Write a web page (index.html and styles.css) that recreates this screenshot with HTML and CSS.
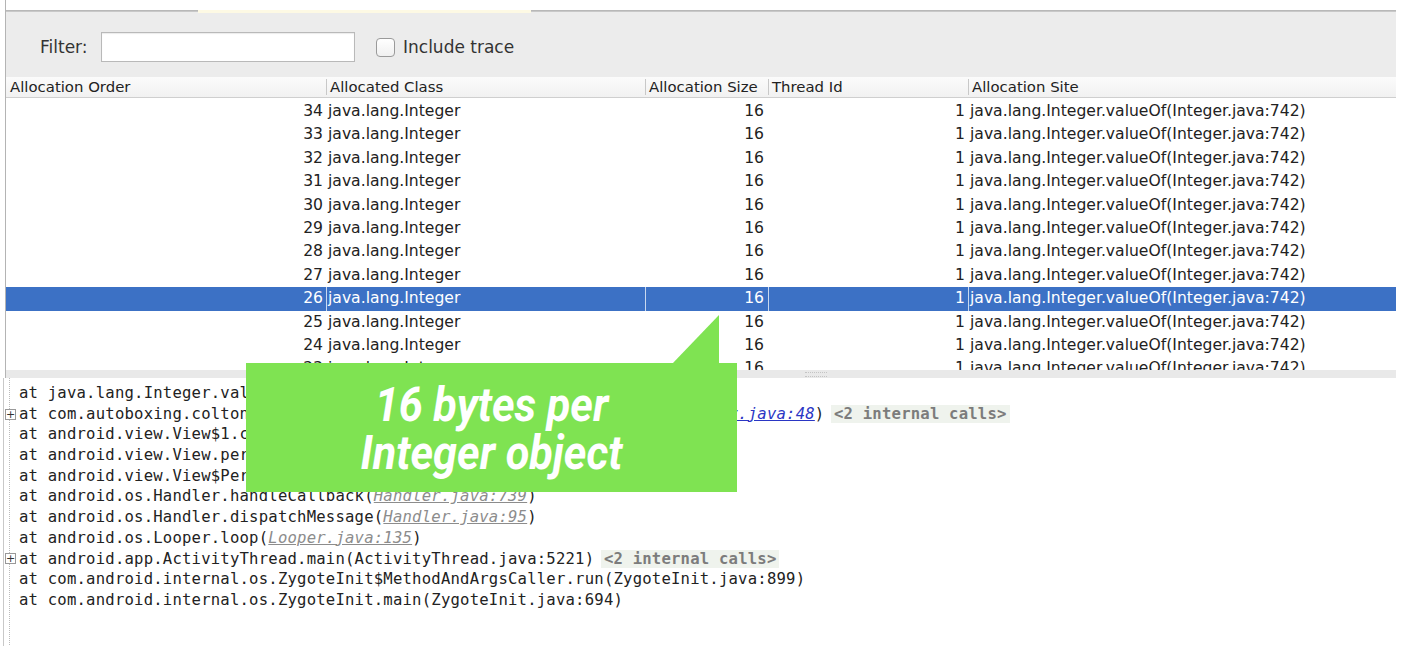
FILE: index.html
```html
<!DOCTYPE html>
<html>
<head>
<meta charset="utf-8">
<link rel="stylesheet" href="styles.css">
</head>
<body>
<div class="window">
  <div class="tabstrip"><span class="tab-a"></span><span class="tab-active"></span><span class="tab-b"></span></div>
  <div class="filterbar">
    <label class="filter-label">Filter:</label>
    <div class="filter-input"></div>
    <span class="checkbox"></span>
    <span class="check-label">Include trace</span>
  </div>
  <div class="table">
    <div class="thead">
      <div class="th">Allocation Order</div>
      <div class="th sep">Allocated Class</div>
      <div class="th sep">Allocation Size</div>
      <div class="th sep">Thread Id</div>
      <div class="th sep">Allocation Site</div>
    </div>
    <div class="tbody">
      <div class="row"><div class="c1">34</div><div class="c2">java.lang.Integer</div><div class="c3">16</div><div class="c4">1</div><div class="c5">java.lang.Integer.valueOf(Integer.java:742)</div></div>
      <div class="row"><div class="c1">33</div><div class="c2">java.lang.Integer</div><div class="c3">16</div><div class="c4">1</div><div class="c5">java.lang.Integer.valueOf(Integer.java:742)</div></div>
      <div class="row"><div class="c1">32</div><div class="c2">java.lang.Integer</div><div class="c3">16</div><div class="c4">1</div><div class="c5">java.lang.Integer.valueOf(Integer.java:742)</div></div>
      <div class="row"><div class="c1">31</div><div class="c2">java.lang.Integer</div><div class="c3">16</div><div class="c4">1</div><div class="c5">java.lang.Integer.valueOf(Integer.java:742)</div></div>
      <div class="row"><div class="c1">30</div><div class="c2">java.lang.Integer</div><div class="c3">16</div><div class="c4">1</div><div class="c5">java.lang.Integer.valueOf(Integer.java:742)</div></div>
      <div class="row"><div class="c1">29</div><div class="c2">java.lang.Integer</div><div class="c3">16</div><div class="c4">1</div><div class="c5">java.lang.Integer.valueOf(Integer.java:742)</div></div>
      <div class="row"><div class="c1">28</div><div class="c2">java.lang.Integer</div><div class="c3">16</div><div class="c4">1</div><div class="c5">java.lang.Integer.valueOf(Integer.java:742)</div></div>
      <div class="row"><div class="c1">27</div><div class="c2">java.lang.Integer</div><div class="c3">16</div><div class="c4">1</div><div class="c5">java.lang.Integer.valueOf(Integer.java:742)</div></div>
      <div class="row selected"><div class="c1">26</div><div class="c2">java.lang.Integer</div><div class="c3">16</div><div class="c4">1</div><div class="c5">java.lang.Integer.valueOf(Integer.java:742)</div></div>
      <div class="row"><div class="c1">25</div><div class="c2">java.lang.Integer</div><div class="c3">16</div><div class="c4">1</div><div class="c5">java.lang.Integer.valueOf(Integer.java:742)</div></div>
      <div class="row"><div class="c1">24</div><div class="c2">java.lang.Integer</div><div class="c3">16</div><div class="c4">1</div><div class="c5">java.lang.Integer.valueOf(Integer.java:742)</div></div>
      <div class="row"><div class="c1">23</div><div class="c2">java.lang.Integer</div><div class="c3">16</div><div class="c4">1</div><div class="c5">java.lang.Integer.valueOf(Integer.java:742)</div></div>
    </div>
  </div>
  <div class="splitter"><span class="grip"></span></div>
</div>
<div class="trace">
  <div class="gutter">
    <div class="gl"></div>
    <div class="gl"><span class="plus">+</span></div>
    <div class="gl"></div><div class="gl"></div><div class="gl"></div><div class="gl"></div><div class="gl"></div><div class="gl"></div>
    <div class="gl"><span class="plus">+</span></div>
    <div class="gl"></div><div class="gl"></div>
  </div>
  <div class="lines">
    <div class="ln">at java.lang.Integer.valueOf(Integer.java:742)</div>
    <div class="ln">at com.autoboxing.coltonidoodle.autoboxing.MainActivity$1.call(<span class="link">MainActivity.java:48</span>) <span class="internal">&lt;2 internal calls&gt;</span></div>
    <div class="ln">at android.view.View$1.call(View.java:5207)</div>
    <div class="ln">at android.view.View.performClick(View.java:4780)</div>
    <div class="ln">at android.view.View$PerformClick.run(View.java:19866)</div>
    <div class="ln">at android.os.Handler.handleCallback(<span class="glink">Handler.java:739</span>)</div>
    <div class="ln">at android.os.Handler.dispatchMessage(<span class="glink">Handler.java:95</span>)</div>
    <div class="ln">at android.os.Looper.loop(<span class="glink">Looper.java:135</span>)</div>
    <div class="ln">at android.app.ActivityThread.main(ActivityThread.java:5221) <span class="internal">&lt;2 internal calls&gt;</span></div>
    <div class="ln">at com.android.internal.os.ZygoteInit$MethodAndArgsCaller.run(ZygoteInit.java:899)</div>
    <div class="ln">at com.android.internal.os.ZygoteInit.main(ZygoteInit.java:694)</div>
  </div>
</div>
<div class="callout">
  <div class="callout-text">16 bytes per<br>Integer object</div>
</div>
</body>
</html>
```

FILE: styles.css
```css
html, body {
  margin: 0;
  padding: 0;
  background: #ffffff;
  overflow: hidden;
  width: 1428px;
  height: 646px;
}
body {
  font-family: "DejaVu Sans", "Liberation Sans", sans-serif;
  color: #222;
  position: relative;
}
.window {
  margin-left: 5px;
  width: 1390px;
  border-left: 1px solid #b4b4b4;
}
.tabstrip {
  height: 11px;
  display: flex;
  align-items: flex-end;
  background: #fff;
}
.tab-a {
  width: 192px;
  height: 1px;
  background: #b8b8b8;
}
.tab-active {
  width: 333px;
  height: 3px;
  background: #fdf9e4;
  margin-bottom: -2px;
}
.tab-b {
  flex: 1;
  height: 1px;
  background: #b8b8b8;
}
.filterbar {
  height: 66px;
  background: #ececec;
  border-top: 1px solid #c8c8c8;
  display: flex;
  align-items: center;
  padding-left: 34px;
  padding-top: 5px;
  box-sizing: border-box;
  font-size: 17px;
  color: #333;
}
.filter-label {
  width: 61px;
}
.filter-input {
  width: 252px;
  height: 28px;
  background: #fff;
  border: 1px solid #b9b9b9;
  box-shadow: inset 0 1px 1px rgba(0,0,0,0.08);
}
.checkbox {
  width: 17px;
  height: 17px;
  margin-left: 21px;
  border: 1px solid #9a9a9a;
  border-radius: 4px;
  background: linear-gradient(#ffffff, #f0f0f0);
}
.check-label {
  margin-left: 8px;
}
.table {
  font-size: 15.6px;
}
.thead {
  display: grid;
  grid-template-columns: 320px 319px 123px 200px 1fr;
  height: 21px;
  background: linear-gradient(#fbfbfb, #f1f1f1);
  border-bottom: 1px solid #cfcfcf;
  box-sizing: border-box;
  align-items: center;
  color: #222;
  font-size: 14.9px;
}
.th {
  padding-left: 4px;
  line-height: 16px;
  white-space: nowrap;
}
.th.sep {
  border-left: 1px solid #c8c8c8;
  padding-left: 3px;
}
.tbody {
  height: 272px;
  overflow: hidden;
  background: #fff;
  padding-top: 2px;
  box-sizing: border-box;
}
.row {
  display: grid;
  grid-template-columns: 320px 319px 123px 200px 1fr;
  height: 23.4px;
  line-height: 23.4px;
  white-space: nowrap;
}
.row > div {
  overflow: hidden;
}
.c1 { text-align: right; padding-right: 3px; }
.c2 { padding-left: 1px; border-left: 1px solid transparent; }
.c3 { text-align: right; padding-right: 4px; border-left: 1px solid transparent; }
.c4 { text-align: right; padding-right: 3px; border-left: 1px solid transparent; }
.c5 { padding-left: 1px; border-left: 1px solid transparent; }
.row.selected {
  background: #3c71c5;
  color: #fff;
}
.row.selected > div + div {
  border-left-color: #c9d8ef;
}
.splitter {
  height: 8px;
  background: #e9e9e9;
  display: flex;
  justify-content: center;
  align-items: center;
}
.grip {
  width: 22px;
  height: 3px;
  margin-left: 230px;
  border-top: 1px dotted #c4c4c4;
  border-bottom: 1px dotted #c4c4c4;
}
.trace {
  display: flex;
  padding-top: 5px;
  font-family: "DejaVu Sans Mono", "Liberation Mono", monospace;
  font-size: 15.6px;
  letter-spacing: 0.2px;
  color: #222;
}
.gutter {
  width: 15px;
  margin-left: 3px;
  margin-top: -5px;
  padding-top: 5px;
  border-left: 1px solid #c8c8c8;
  height: 270px;
  box-sizing: border-box;
  background-image: linear-gradient(#bbb 50%, transparent 50%);
  background-size: 1px 2px;
  background-repeat: repeat-y;
  background-position: 5px 0;
}
.gl {
  height: 20.7px;
  display: flex;
  align-items: center;
}
.plus {
  display: flex;
  align-items: center;
  justify-content: center;
  width: 9px;
  height: 9px;
  margin-left: 1px;
  border: 1px solid #999;
  background: #fff;
  font-family: "DejaVu Sans", sans-serif;
  font-size: 11px;
  line-height: 9px;
  letter-spacing: 0;
  color: #333;
}
.lines {
  padding-left: 1px;
}
.ln {
  height: 20.7px;
  line-height: 20.7px;
  white-space: nowrap;
}
.link {
  color: #2a36c4;
  font-style: italic;
  text-decoration: underline;
}
.glink {
  color: #8c8c8c;
  font-style: italic;
  text-decoration: underline;
}
.internal {
  color: #7c7c7c;
  background: #eff3ed;
  font-weight: bold;
  padding: 0 3px;
  margin-left: -3px;
}
.callout {
  position: absolute;
  left: 246px;
  top: 363px;
  width: 491px;
  height: 129px;
  background: #7fe352;
  display: flex;
  align-items: center;
  justify-content: center;
}
.callout::before {
  content: "";
  position: absolute;
  left: 426px;
  top: -48px;
  width: 47px;
  height: 49px;
  background: #7fe352;
  clip-path: polygon(0 100%, 100% 0, 100% 100%);
}
.callout-text {
  font-family: Roboto, "Liberation Sans", sans-serif;
  font-weight: 700;
  font-style: italic;
  font-size: 48px;
  line-height: 48px;
  color: #fff;
  text-align: center;
  transform: scaleX(0.9);
  margin-top: 2px;
  margin-left: 0;
}
```
